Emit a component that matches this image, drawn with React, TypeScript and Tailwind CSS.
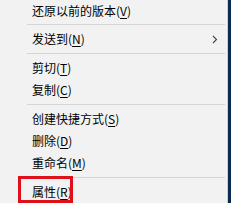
const FONT = "font-['Microsoft_YaHei_UI','Noto_Sans_CJK_SC',sans-serif]";

type Item = { label: string; key: string; sub?: boolean; first?: boolean };
type Row = Item | "sep";

const ROWS: Row[] = [
  { label: "还原以前的版本", key: "V", first: true },
  "sep",
  { label: "发送到", key: "N", sub: true },
  "sep",
  { label: "剪切", key: "T" },
  { label: "复制", key: "C" },
  "sep",
  { label: "创建快捷方式", key: "S" },
  { label: "删除", key: "D" },
  { label: "重命名", key: "M" },
  "sep",
  { label: "属性", key: "R" },
];

export default function App() {
  return (
    <div className={`relative flex h-[203px] w-[231px] overflow-hidden bg-[#0b2c4e] ${FONT}`}>
      <div className="flex h-full w-[228px] flex-col border-r border-[#cfcfcf] bg-[#f2f2f2] text-[12px] text-black">
        {ROWS.map((r, i) =>
          r === "sep" ? (
            <div key={i} className="flex h-[7px] shrink-0 items-center pl-[27px] pr-[2px]">
              <div className="h-px w-full bg-[#d5d5d5]" />
            </div>
          ) : (
            <div
              key={i}
              className={`flex shrink-0 items-center pl-[32px] pr-[9px] ${r.first ? "h-[21px]" : "h-[22px]"}`}
            >
              <span className="leading-none">
                {r.label}(<span className="underline underline-offset-2">{r.key}</span>)
              </span>
              {r.sub && (
                <svg className="ml-auto" width="6" height="9" viewBox="0 0 6 9">
                  <path d="M1 1 L4.5 4.5 L1 8" fill="none" stroke="#444" strokeWidth="1.1" />
                </svg>
              )}
            </div>
          )
        )}
      </div>
      <div className="absolute left-[18px] top-[176px] h-[27px] w-[55px] border-[3px] border-[#e0101a]" />
    </div>
  );
}
